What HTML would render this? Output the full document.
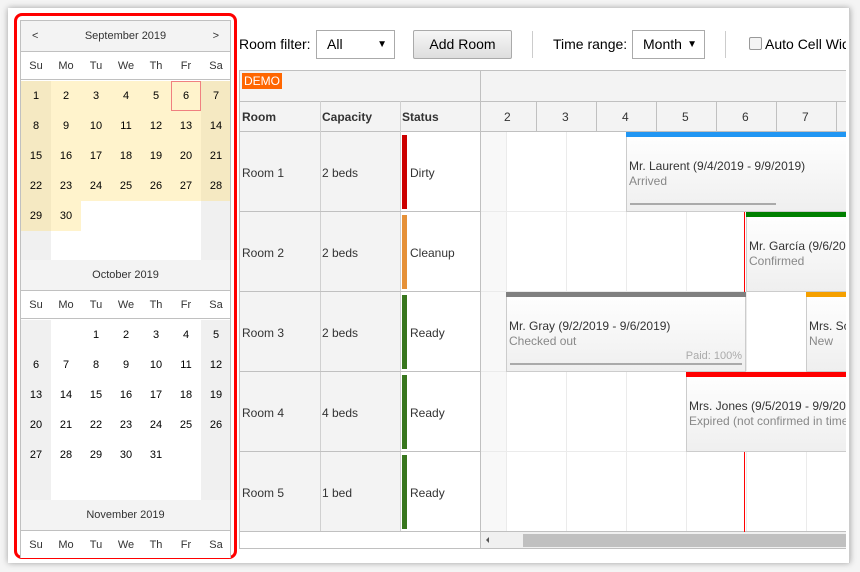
<!DOCTYPE html>
<html><head><meta charset="utf-8"><style>
*{box-sizing:border-box;margin:0;padding:0}
body{width:860px;height:572px;background:#f4f4f4;position:relative;overflow:hidden;font-family:"Liberation Sans","DejaVu Sans",sans-serif;color:#333}
.a{position:absolute}
.card{left:8px;top:8px;width:842px;height:555px;background:#fff;box-shadow:0 0 6px rgba(0,0,0,.35)}
.red{left:14px;top:13px;width:223px;height:546px;border:3px solid #f00;border-radius:8px}
.cal{left:20px;top:20px;width:211px;height:538px;border:1px solid #c0c0c0;border-bottom:none;background:#fff;overflow:hidden;font-size:11px}
.mh{position:absolute;left:0;width:209px;height:31px;background:#f3f3f3;border-bottom:1px solid #c0c0c0;text-align:center;line-height:31px;color:#333}
.dw{position:absolute;left:0;width:209px;height:28px;border-bottom:1px solid #c0c0c0;background:#fff}
.dw span,.c{position:absolute;width:30px;text-align:center}
.dw span{line-height:28px;top:0}
.c{height:30px;line-height:30px;color:#000}
.t{font-size:12px;color:#333}
.sch{left:239px;top:70px;width:607px;height:479px;border:1px solid #c0c0c0;border-right:none;overflow:hidden;background:#fff}
.hl{background:#c0c0c0;position:absolute}
.rc{position:absolute;font-size:12px;color:#333}
.ev{position:absolute;background:linear-gradient(#fff,#efefef);border:1px solid #ccc;font-size:12px}
.ev .bar{position:absolute;left:-1px;right:-1px;top:-1px;height:5px}
.ev .n{position:absolute;left:2px;top:26px;color:#333;white-space:nowrap}
.ev .s{position:absolute;left:2px;top:41px;color:#888;white-space:nowrap}
.sel{position:absolute;top:30px;height:29px;border:1px solid #aaa;background:#fff;font-size:14px;line-height:27px;padding-left:10px;color:#000}
.sel i{position:absolute;right:7px;top:0;font-style:normal;font-size:10px}
</style></head><body>
<div class="a card"></div>
<div class="a red"></div>
<div class="a cal">
 <div class="mh" style="top:0"><span style="position:absolute;left:11px">&lt;</span>September 2019<span style="position:absolute;right:11px">&gt;</span></div>
 <div class="dw" style="top:31px"><span style="left:0">Su</span><span style="left:30px">Mo</span><span style="left:60px">Tu</span><span style="left:90px">We</span><span style="left:120px">Th</span><span style="left:150px">Fr</span><span style="left:180px">Sa</span></div>
 <div id="sep"></div>
 <div class="mh" style="top:239px">October 2019</div>
 <div class="dw" style="top:270px"><span style="left:0">Su</span><span style="left:30px">Mo</span><span style="left:60px">Tu</span><span style="left:90px">We</span><span style="left:120px">Th</span><span style="left:150px">Fr</span><span style="left:180px">Sa</span></div>
 <div class="mh" style="top:479px">November 2019</div>
 <div class="dw" style="top:510px"><span style="left:0">Su</span><span style="left:30px">Mo</span><span style="left:60px">Tu</span><span style="left:90px">We</span><span style="left:120px">Th</span><span style="left:150px">Fr</span><span style="left:180px">Sa</span></div>
 <!-- September cells -->
 <div class="c" style="left:0;top:60px;height:150px;background:#f5e9c2"></div>
 <div class="c" style="left:180px;top:60px;height:120px;background:#f5e9c2"></div>
 <div class="c" style="left:30px;top:60px;width:150px;height:120px;background:#fff3cc"></div>
 <div class="c" style="left:30px;top:180px;height:30px;background:#fff3cc"></div>
 <div class="c" style="left:0;top:210px;height:29px;background:#f0f0f0"></div>
 <div class="c" style="left:180px;top:180px;height:59px;background:#f0f0f0"></div>
 <div class="c" style="left:150px;top:60px;border:1px solid #f08080;line-height:28px"></div>
 <div id="sd"></div>
 <!-- October -->
 <div class="c" style="left:0;top:299px;height:180px;background:#f0f0f0"></div>
 <div class="c" style="left:180px;top:299px;height:180px;background:#f0f0f0"></div>
</div>
<script>
(function(){var cal=document.querySelector('.cal'),h='';
function put(d,col,row,top){h+='<div class="c" style="left:'+col*30+'px;top:'+(top+row*30)+'px">'+d+'</div>';}
for(var d=1;d<=30;d++){var i=d-1;put(d,i%7,Math.floor(i/7),60);}
for(var d=1;d<=31;d++){var i=d+1;put(d,i%7,Math.floor(i/7),299);}
var x=document.createElement('div');x.innerHTML=h;while(x.firstChild)cal.appendChild(x.firstChild);})();
</script>

<!-- toolbar -->
<div class="a" style="left:239px;top:36px;font-size:14px;color:#000">Room filter:</div>
<div class="sel" style="left:316px;width:79px">All<i>▼</i></div>
<div class="a" style="left:413px;top:30px;width:99px;height:29px;border:1px solid #aaa;border-radius:2px;background:linear-gradient(#f6f6f6,#dedede);font-size:14px;line-height:27px;text-align:center;color:#000">Add Room</div>
<div class="a" style="left:532px;top:31px;width:1px;height:27px;background:#ccc"></div>
<div class="a" style="left:553px;top:36px;font-size:14px;color:#000">Time range:</div>
<div class="sel" style="left:632px;width:73px">Month<i>▼</i></div>
<div class="a" style="left:725px;top:31px;width:1px;height:27px;background:#ccc"></div>
<div class="a" style="left:749px;top:37px;width:13px;height:13px;border:1px solid #999;border-radius:2px;background:#f4f4f4"></div>
<div class="a" style="left:765px;top:36px;font-size:14px;color:#000;width:81px;overflow:hidden;white-space:nowrap">Auto Cell Width</div>

<!-- scheduler -->
<div class="a sch">
 <div class="a" style="left:0;top:0;width:607px;height:30px;background:#f3f3f3"></div>
 <div class="a" style="left:2px;top:2px;background:#f60;color:#fff;font-size:12px;padding:1px 2px;line-height:14px">DEMO</div>
 <div class="a" style="left:0;top:30px;width:240px;height:430px;background:#f3f3f3"></div>
 <div class="a" style="left:160px;top:61px;width:80px;height:400px;background:#fff"></div>
 <div class="a" style="left:240px;top:30px;width:367px;height:31px;background:#f3f3f3"></div>
 <div class="a" style="left:240px;top:61px;width:27px;height:400px;background:#f8f8f8"></div>
 <!-- light grid lines -->
 <div class="hl" style="left:266px;top:61px;width:1px;height:400px;background:#ebebeb"></div>
 <div class="hl" style="left:326px;top:61px;width:1px;height:400px;background:#ebebeb"></div>
 <div class="hl" style="left:386px;top:61px;width:1px;height:400px;background:#ebebeb"></div>
 <div class="hl" style="left:446px;top:61px;width:1px;height:400px;background:#ebebeb"></div>
 <div class="hl" style="left:506px;top:61px;width:1px;height:400px;background:#ebebeb"></div>
 <div class="hl" style="left:566px;top:61px;width:1px;height:400px;background:#ebebeb"></div>
 <div class="hl" style="left:240px;top:140px;width:367px;height:1px;background:#ebebeb"></div>
 <div class="hl" style="left:240px;top:220px;width:367px;height:1px;background:#ebebeb"></div>
 <div class="hl" style="left:240px;top:300px;width:367px;height:1px;background:#ebebeb"></div>
 <div class="hl" style="left:240px;top:380px;width:367px;height:1px;background:#ebebeb"></div>
 <!-- header lines -->
 <div class="hl" style="left:0;top:30px;width:607px;height:1px"></div>
 <div class="hl" style="left:0;top:60px;width:240px;height:1px"></div>
 <div class="hl" style="left:240px;top:60px;width:367px;height:1px"></div>
 <div class="hl" style="left:240px;top:0;width:1px;height:479px"></div>
 <div class="hl" style="left:80px;top:30px;width:1px;height:430px;background:#d0d0d0"></div>
 <div class="hl" style="left:160px;top:30px;width:1px;height:430px;background:#d0d0d0"></div>
 <div class="hl" style="left:296px;top:30px;width:1px;height:31px"></div>
 <div class="hl" style="left:356px;top:30px;width:1px;height:31px"></div>
 <div class="hl" style="left:416px;top:30px;width:1px;height:31px"></div>
 <div class="hl" style="left:476px;top:30px;width:1px;height:31px"></div>
 <div class="hl" style="left:536px;top:30px;width:1px;height:31px"></div>
 <div class="hl" style="left:596px;top:30px;width:1px;height:31px"></div>
 <div class="hl" style="left:0;top:140px;width:240px;height:1px"></div>
 <div class="hl" style="left:0;top:220px;width:240px;height:1px"></div>
 <div class="hl" style="left:0;top:300px;width:240px;height:1px"></div>
 <div class="hl" style="left:0;top:380px;width:240px;height:1px"></div>
 <div class="hl" style="left:0;top:460px;width:607px;height:1px"></div>
 <div class="rc" style="left:2px;top:39px;font-weight:bold">Room</div>
 <div class="rc" style="left:82px;top:39px;font-weight:bold">Capacity</div>
 <div class="rc" style="left:162px;top:39px;font-weight:bold">Status</div>
 <div class="rc" style="left:264px;top:39px">2</div><div class="rc" style="left:322px;top:39px">3</div><div class="rc" style="left:382px;top:39px">4</div><div class="rc" style="left:442px;top:39px">5</div><div class="rc" style="left:502px;top:39px">6</div><div class="rc" style="left:562px;top:39px">7</div>
 <div class="rc" style="left:2px;top:95px">Room 1</div><div class="rc" style="left:82px;top:95px">2 beds</div><div class="a" style="left:162px;top:64px;width:5px;height:74px;background:#cc0000"></div><div class="rc" style="left:170px;top:95px">Dirty</div>
 <div class="rc" style="left:2px;top:175px">Room 2</div><div class="rc" style="left:82px;top:175px">2 beds</div><div class="a" style="left:162px;top:144px;width:5px;height:74px;background:#e69138"></div><div class="rc" style="left:170px;top:175px">Cleanup</div>
 <div class="rc" style="left:2px;top:255px">Room 3</div><div class="rc" style="left:82px;top:255px">2 beds</div><div class="a" style="left:162px;top:224px;width:5px;height:74px;background:#38761d"></div><div class="rc" style="left:170px;top:255px">Ready</div>
 <div class="rc" style="left:2px;top:335px">Room 4</div><div class="rc" style="left:82px;top:335px;color:#333">4 beds</div><div class="a" style="left:162px;top:304px;width:5px;height:74px;background:#38761d"></div><div class="rc" style="left:170px;top:335px">Ready</div>
 <div class="rc" style="left:2px;top:415px">Room 5</div><div class="rc" style="left:82px;top:415px">1 bed</div><div class="a" style="left:162px;top:384px;width:5px;height:74px;background:#38761d"></div><div class="rc" style="left:170px;top:415px">Ready</div>
 <!-- today line -->
 <div class="a" style="left:504px;top:141px;width:1px;height:320px;background:#f00"></div>
 <!-- events -->
 <div class="ev" style="left:386px;top:61px;width:230px;height:80px"><div class="bar" style="background:#2196f3"></div><div class="n">Mr. Laurent (9/4/2019 - 9/9/2019)</div><div class="s">Arrived</div><div class="a" style="left:3px;top:70px;width:146px;height:2px;background:#aaa"></div></div>
 <div class="ev" style="left:506px;top:141px;width:110px;height:80px"><div class="bar" style="background:#008000"></div><div class="n">Mr. García (9/6/2019 - 9/10/2019)</div><div class="s">Confirmed</div></div>
 <div class="ev" style="left:266px;top:221px;width:240px;height:80px"><div class="bar" style="background:#808080"></div><div class="n">Mr. Gray (9/2/2019 - 9/6/2019)</div><div class="s">Checked out</div><div class="a" style="right:3px;top:57px;font-size:11px;color:#aaa">Paid: 100%</div><div class="a" style="left:3px;top:70px;width:232px;height:2px;background:#aaa"></div></div>
 <div class="ev" style="left:566px;top:221px;width:60px;height:80px"><div class="bar" style="background:#f5a000"></div><div class="n">Mrs. Scott</div><div class="s">New</div></div>
 <div class="ev" style="left:446px;top:301px;width:170px;height:80px"><div class="bar" style="background:#f00"></div><div class="n">Mrs. Jones (9/5/2019 - 9/9/2019)</div><div class="s">Expired (not confirmed in time)</div></div>
 <!-- scrollbar -->
 <div class="a" style="left:241px;top:461px;width:366px;height:17px;background:#f0f0f0"></div>
 <div class="a" style="left:246px;top:466px;width:0;height:0;border-top:3px solid transparent;border-bottom:3px solid transparent;border-right:3px solid #555"></div>
 <div class="a" style="left:283px;top:463px;width:324px;height:13px;background:#c0c0c0"></div>
 <div class="hl" style="left:0;top:478px;width:607px;height:1px"></div>
</div>
<div class="a" style="left:849px;top:8px;width:1px;height:555px;background:#ccc"></div>
</body></html>
